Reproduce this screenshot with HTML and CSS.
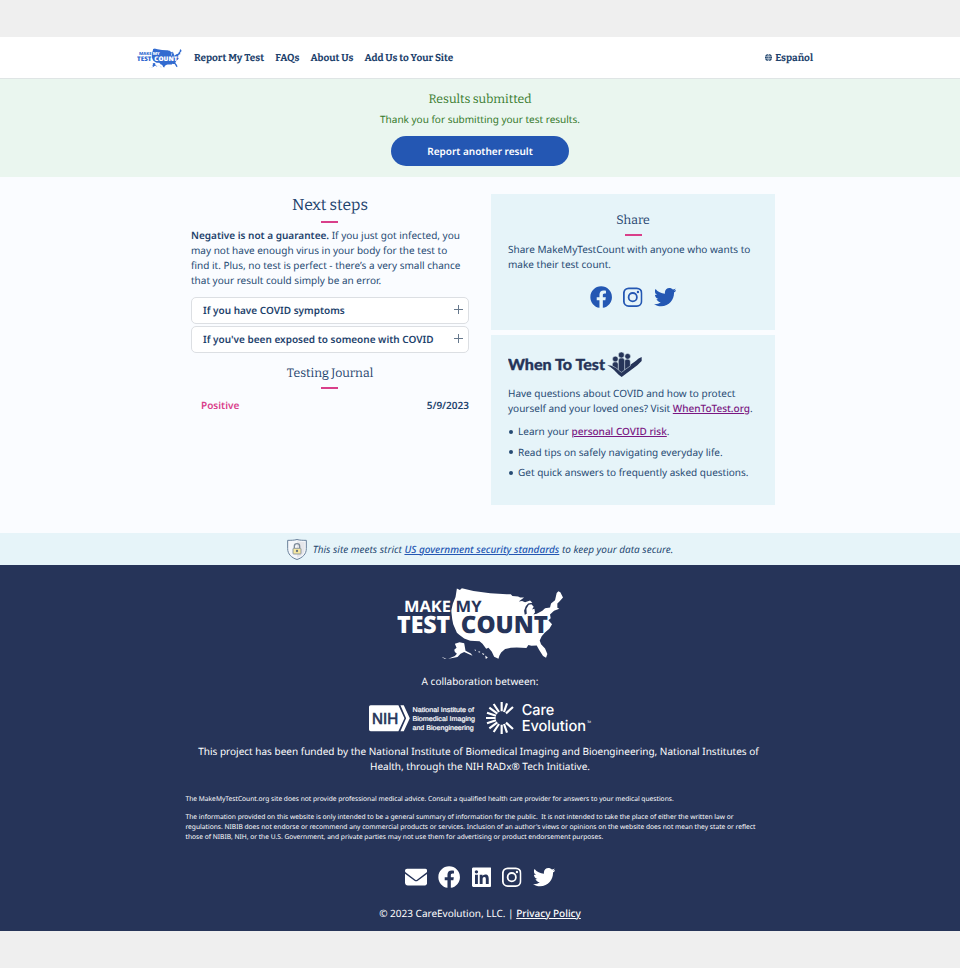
FILE: index.html
```
<!DOCTYPE html>
<html lang="en">
<head>
<meta charset="utf-8">
<title>MakeMyTestCount</title>
<link rel="stylesheet" href="styles.css">
</head>
<body>
<svg class="defs" aria-hidden="true">
  <symbol id="logo" viewBox="20 18 502 224">
    <path fill="currentColor" d="M200 25L209 29 215 24 250 32 300 39 350 42 362 42 367 47 384 49 390 52 402 52 386 64 396 62 405 66 420 61 427 68 414 70 407 78 402 92 404 104 410 101 409 86 416 74 424 72 431 80 426 88 433 86 435 96 430 103 440 101 457 92 465 84 480 82 483 70 495 60 500 38 505 33 511 36 519 52 509 63 502 70 502 83 508 86 492 92 480 103 482 114 475 120 486 132 478 146 464 158 455 168 449 181 453 192 465 205 472 222 468 233 459 228 447 209 440 196 424 197 415 195 409 204 395 203 380 202 362 203 345 207 333 217 328 226 325 236 312 230 305 215 295 203 288 206 277 191 268 183 240 182 222 175 207 164 200 158 189 132 186 117 183 92 188 70 196 50z"/>
    <path fill="currentColor" d="M194 191L208 186 222 189 226 212 242 220 247 227 235 222 222 216 211 221 202 231 187 234 174 236 194 228 200 221 194 216 192 209 199 203zM253 208l5 2-3 3zM265 213l6 3-5 2zM275 219l8 3-4 3zM285 226l8 6-6 5zM153 230l16 6-6 0z"/>
    <g font-family="Open Sans, Noto Sans, sans-serif" stroke-linejoin="round" text-rendering="geometricPrecision">
      <text class="logo-light" x="41" y="96" font-size="47" font-weight="700" textLength="141" lengthAdjust="spacingAndGlyphs">MAKE</text>
      <text class="logo-dark" x="196" y="96" font-size="47" font-weight="700" textLength="78" lengthAdjust="spacingAndGlyphs">MY</text>
      <text class="logo-light" x="20" y="159" font-size="72" font-weight="800" textLength="160" lengthAdjust="spacingAndGlyphs">TEST</text>
      <text class="logo-dark" x="212" y="159" font-size="72" font-weight="800" textLength="262" lengthAdjust="spacingAndGlyphs">COUNT</text>
    </g>
  </symbol>
  <symbol id="facebook" viewBox="0 0 512 512"><path d="M504 256C504 119 393 8 256 8S8 119 8 256c0 123.78 90.69 226.38 209.25 245V327.69h-63V256h63v-54.64c0-62.15 37-96.48 93.67-96.48 27.14 0 55.52 4.84 55.52 4.84v61h-31.28c-30.8 0-40.41 19.12-40.41 38.73V256h68.78l-11 71.69h-57.78V501C413.31 482.38 504 379.78 504 256z"/></symbol>
  <symbol id="instagram" viewBox="0 0 448 512"><rect x="20" y="52" width="408" height="408" rx="112" fill="none" stroke="currentColor" stroke-width="41"/><circle cx="224" cy="256" r="95" fill="none" stroke="currentColor" stroke-width="41"/><circle cx="343" cy="137" r="27"/></symbol>
  <symbol id="twitter" viewBox="0 0 512 512"><path d="M459.37 151.716c.325 4.548.325 9.097.325 13.645 0 138.72-105.583 298.558-298.558 298.558-59.452 0-114.68-17.219-161.137-47.106 8.447.974 16.568 1.299 25.34 1.299 49.055 0 94.213-16.568 130.274-44.832-46.132-.975-84.792-31.188-98.112-72.772 6.498.974 12.995 1.624 19.818 1.624 9.421 0 18.843-1.3 27.614-3.573-48.081-9.747-84.143-51.98-84.143-102.985v-1.299c13.969 7.797 30.214 12.67 47.431 13.319-28.264-18.843-46.781-51.005-46.781-87.391 0-19.492 5.197-37.36 14.294-52.954 51.655 63.675 129.3 105.258 216.365 109.807-1.624-7.797-2.599-15.918-2.599-24.04 0-57.828 46.782-104.934 104.934-104.934 30.213 0 57.502 12.67 76.67 33.137 23.715-4.548 46.456-13.32 66.599-25.34-7.798 24.366-24.366 44.833-46.132 57.827 21.117-2.273 41.584-8.122 60.426-16.243-14.292 20.791-32.161 39.308-52.628 54.253z"/></symbol>
  <symbol id="linkedin" viewBox="0 0 448 512"><path d="M416 32H31.9C14.3 32 0 46.5 0 64.3v383.4C0 465.5 14.3 480 31.9 480H416c17.6 0 32-14.5 32-32.3V64.3c0-17.8-14.4-32.3-32-32.3zM135.4 416H69V202.2h66.5V416zm-33.2-243c-21.3 0-38.5-17.3-38.5-38.5S80.9 96 102.2 96c21.2 0 38.5 17.3 38.5 38.5 0 21.3-17.2 38.5-38.5 38.5zm282.1 243h-66.4V312c0-24.8-.5-56.7-34.5-56.7-34.6 0-39.9 27-39.9 54.9V416h-66.4V202.2h63.7v29.2h.9c8.9-16.8 30.6-34.5 62.9-34.5 67.2 0 79.7 44.3 79.7 101.9V416z"/></symbol>
  <symbol id="envelope" viewBox="0 0 512 512"><path d="M48 64C21.5 64 0 85.5 0 112c0 15.1 7.1 29.3 19.2 38.4L236.8 313.6c11.4 8.5 27 8.5 38.4 0L492.8 150.4c12.1-9.1 19.2-23.3 19.2-38.4c0-26.5-21.5-48-48-48H48zM0 176V384c0 35.3 28.7 64 64 64H448c35.3 0 64-28.7 64-64V176L294.4 339.2c-22.8 17.1-54 17.1-76.8 0L0 176z"/></symbol>
</svg>

<header class="header">
  <svg class="header-logo"><use href="#logo"/></svg>
  <nav class="nav">
    <a>Report My Test</a><a>FAQs</a><a>About Us</a><a>Add Us to Your Site</a>
  </nav>
  <a class="lang"><svg class="globe" viewBox="0 0 16 16"><circle cx="8" cy="8" r="8" fill="currentColor"/><path d="M0 5.500h16M0 10.500h16M8 0v16M8 0C3.500 4 3.500 12 8 16M8 0c4.500 4 4.500 12 0 16" fill="none" stroke="#fff" stroke-width="1"/></svg><span>Español</span></a>
</header>

<section class="banner">
  <h2>Results submitted</h2>
  <p>Thank you for submitting your test results.</p>
  <a class="button">Report another result</a>
</section>

<main class="main">
  <section class="steps">
    <h1>Next steps</h1>
    <div class="rule"></div>
    <p class="guarantee"><b>Negative is not a guarantee.</b> If you just got infected, you<br>may not have enough virus in your body for the test to<br>find it. Plus, no test is perfect - there’s a very small chance<br>that your result could simply be an error.</p>
    <div class="accordion"><span>If you have COVID symptoms</span><i class="plus"></i></div>
    <div class="accordion"><span>If you've been exposed to someone with COVID</span><i class="plus"></i></div>
    <h2 class="journal-title">Testing Journal</h2>
    <div class="rule"></div>
    <div class="journal"><span class="positive">Positive</span><span>5/9/2023</span></div>
  </section>
  <aside class="side">
    <section class="card share">
      <h2>Share</h2>
      <div class="rule"></div>
      <p>Share MakeMyTestCount with anyone who wants to<br>make their test count.</p>
      <div class="social">
        <svg class="icon"><use href="#facebook"/></svg><svg class="icon narrow"><use href="#instagram"/></svg><svg class="icon"><use href="#twitter"/></svg>
      </div>
    </section>
    <section class="card when">
      <svg class="when-logo" viewBox="0 0 402 78">
        <text x="0" y="53" textLength="291" lengthAdjust="spacingAndGlyphs" font-family="Lato, sans-serif" font-weight="900" font-size="46" fill="#263459" stroke="#263459" stroke-width="1">When To Test</text>
        <g fill="#263459"><path d="M298 40Q318 41 334 52L341 57 384 26Q391 19 401 15V27L388 40 341 75 332 68 318 54Q309 45 298 40z"/><g stroke="#e6f4f9" stroke-width="1.500"><path d="M313 42v-5q0-8 9-8t9 8v16q-8-7-18-11zM349 54V29q0-8 9-8t9 8v13z"/><path d="M331 54V26q0-9 9.500-9t9.500 9v28l-9.500 7z"/><circle cx="322" cy="21" r="8.500"/><circle cx="340" cy="9" r="9"/><circle cx="359" cy="13" r="8.500"/></g></g>
      </svg>
      <p>Have questions about COVID and how to protect<br>yourself and your loved ones? Visit <a>WhenToTest.org</a>.</p>
      <ul><li>Learn your <a>personal COVID risk</a>.</li><li>Read tips on safely navigating everyday life.</li><li>Get quick answers to frequently asked questions.</li></ul>
    </section>
  </aside>
</main>

<section class="security">
  <svg class="shield" viewBox="0 0 60 63"><path d="M30 1.500C22 4 12 4 2 4V29C2 45 13 56 30 61.500 47 56 58 45 58 29V4C48 4 38 4 30 1.500z" fill="#f4f6fa" stroke="#69809b" stroke-width="3"/><path d="M30 6V56C46 50 53 42 53 29V9C44 9 36 8 30 6z" fill="#e6e6ea"/><path d="M22 28v-6q0-8 8-8t8 8v6" fill="none" stroke="#7e8b9a" stroke-width="4"/><rect x="18" y="28" width="24" height="17" rx="2" fill="#f6e7a0" stroke="#7e8b9a" stroke-width="2.500"/><circle cx="30" cy="36" r="3.500" fill="#65717d"/></svg>
  <span>This site meets strict <a>US government security standards</a> to keep your data secure.</span>
</section>

<footer class="footer">
  <svg class="footer-logo"><use href="#logo"/></svg>
  <p class="collab">A collaboration between:</p>
  <div class="partners">
    <svg class="nih" viewBox="0 0 320 80">
      <path fill="#fff" d="M5 0H88L106 39 88 78H5q-5 0-5-5V5q0-5 5-5zM94 0h10l18 39-18 39H94l17-39z"/>
      <g font-family="Liberation Sans, Arial, sans-serif" text-rendering="geometricPrecision">
        <text x="9" y="56" font-size="47" fill="#263459" stroke="#263459" stroke-width="2" textLength="78" lengthAdjust="spacingAndGlyphs">NIH</text>
        <g fill="#fff" stroke="#fff" stroke-width=".6" font-size="20.500"><text x="130" y="20" textLength="184" lengthAdjust="spacingAndGlyphs">National Institute of</text><text x="130" y="47" textLength="187" lengthAdjust="spacingAndGlyphs">Biomedical Imaging</text><text x="130" y="74" textLength="183" lengthAdjust="spacingAndGlyphs">and Bioengineering</text></g>
      </g>
    </svg>
    <svg class="care" viewBox="0 0 318 96">
      <path stroke="#fff" stroke-width="6.500" fill="none" d="M29 48H0M30 41L3 32M34 35L10 17M39 30L23 6M47 28V0M54 30L63 4M60 34L81 15M30 55L3 64M34 61L10 79M39 66L23 90M47 68V96M54 66L63 92M60 62L81 81"/>
      <g font-family="Inter, sans-serif" fill="#fff" text-rendering="geometricPrecision"><text x="107" y="40" font-size="45" font-weight="500" textLength="98" lengthAdjust="spacingAndGlyphs">Care</text><text x="107" y="87" font-size="45" font-weight="500" textLength="193" lengthAdjust="spacingAndGlyphs">Evolution</text><text x="303" y="63" font-size="9" textLength="12">TM</text></g>
    </svg>
  </div>
  <p class="funded">This project has been funded by the National Institute of Biomedical Imaging and Bioengineering, National Institutes of<br><span class="funded-end">Health, through the NIH RADx® Tech Initiative.</span></p>
  <div class="legal">
    <p>The MakeMyTestCount.org site does not provide professional medical advice. Consult a qualified health care provider for answers to your medical questions.</p>
    <p>The information provided on this website is only intended to be a general summary of information for the public. &nbsp;It is not intended to take the place of either the written law or<br>regulations. NIBIB does not endorse or recommend any commercial products or services. Inclusion of an author's views or opinions on the website does not mean they state or reflect<br>those of NIBIB, NIH, or the U.S. Government, and private parties may not use them for advertising or product endorsement purposes.</p>
  </div>
  <div class="social">
    <svg class="icon"><use href="#envelope"/></svg><svg class="icon"><use href="#facebook"/></svg><svg class="icon narrow"><use href="#linkedin"/></svg><svg class="icon narrow"><use href="#instagram"/></svg><svg class="icon"><use href="#twitter"/></svg>
  </div>
  <p class="copyright">© 2023 CareEvolution, LLC. | <a>Privacy Policy</a></p>
</footer>
</body>
</html>
```
FILE: styles.css
```
* { box-sizing: border-box; }
body { margin: 0; padding: 37px 0; background: #efefef; color: #264a73; font: 10px/15px "Noto Sans", sans-serif; text-rendering: geometricPrecision; white-space: nowrap; }
h1, h2, p, ul { margin: 0; padding: 0; }
h1, h2 { font-family: Bitter, "DejaVu Serif Condensed", "DejaVu Serif", serif; font-stretch: condensed; font-weight: 400; text-align: center; color: #1d426c; }
h2 { font-size: 12.3px; line-height: 18px; padding-top: 1px; }
b { font-weight: 600; color: #1d426c; }
.defs { position: absolute; width: 0; height: 0; }
.header { height: 42px; background: #fff; border-bottom: 1px solid #dfe5e5; display: flex; align-items: center; padding: 0 147px 0 137px; font: 700 10px/14px Bitter, "DejaVu Serif Condensed", "DejaVu Serif", serif; font-stretch: condensed; color: #1d426c; }
.header-logo { width: 45px; height: 20px; color: #326bd0; --knock: #fff; }
.nav { display: flex; gap: 11px; margin-left: 12px; }
.lang { margin-left: auto; display: flex; align-items: center; gap: 3px; }
.globe { width: 7px; height: 7px; }
.logo-light { fill: currentColor; stroke: var(--knock); stroke-width: 5px; paint-order: stroke; }
.logo-dark { fill: var(--knock); }
.banner { height: 98px; background: #eaf6ef; color: #35792b; text-align: center; padding-top: 11px; }
.banner h2 { color: #35792b; }
.banner p { margin: 3.4px 0 8.6px; }
.button { display: block; width: 178px; height: 30px; margin: 0 auto; border-radius: 15px; background: #2457b3; color: #fff; font-weight: 600; line-height: 30px; }
.main { height: 356px; background: #fafcff; display: flex; gap: 22px; padding: 17px 185px 0 191px; }
.steps { width: 278px; }
h1 { font-size: 15.7px; line-height: 22px; padding-top: 1px; }
.rule { width: 17px; height: 2px; background: #d93f8a; margin: 4px auto 0; }
.steps .rule { margin-left: 130px; }
.guarantee { margin: 5.4px 0 8.6px; }
.accordion { height: 27px; margin-bottom: 2px; padding: 0 5px 0 11px; border: 1px solid #dcdfe3; border-radius: 5px; background: #fff; display: flex; align-items: center; justify-content: space-between; font-weight: 600; color: #1d426c; }
.plus { width: 9px; height: 9px; margin-bottom: 1px; background: linear-gradient(#66788c, #66788c) center/9px 1px no-repeat, linear-gradient(#66788c, #66788c) center/1px 9px no-repeat; }
.journal-title { margin-top: 11px; }
.journal { display: flex; justify-content: space-between; padding-left: 10px; margin-top: 9px; font-weight: 600; color: #1d426c; }
.positive { color: #d93f8a; }
.side { width: 284px; }
.card { background: #e6f4f9; padding: 0 17px; }
.share { height: 136px; padding-top: 17px; }
.share p { margin: 6px 0 14px; }
.social { display: flex; justify-content: center; gap: 11px; color: #2457b3; }
.icon { width: 22.3px; height: 22.3px; fill: currentColor; }
.narrow { width: 19.5px; }
.when { height: 170px; margin-top: 5px; padding-top: 17px; }
.when-logo { display: block; width: 134px; height: 26px; }
.when p { margin: 8px 0 8.4px; }
.when a { color: #7a1782; font-weight: 500; text-decoration: underline; }
ul { list-style: none; }
li { display: flex; align-items: center; margin-bottom: 5.5px; white-space: pre; }
li::before { content: ""; width: 4px; height: 4px; border-radius: 50%; background: #264a73; margin: 0 5px 0 1px; }
.security { height: 32px; background: #e6f4f9; display: flex; align-items: center; justify-content: center; gap: 6px; font-style: italic; }
.security a { color: #2457b3; font-weight: 500; text-decoration: underline; }
.shield { width: 20px; height: 21px; }
.footer { height: 366px; background: #263459; color: #fff; padding-top: 21px; text-align: center; }
.footer-logo { display: block; width: 167px; height: 75px; margin: 0 auto; color: #fff; --knock: #263459; }
.collab { margin-top: 13px; }
.partners { display: flex; gap: 10px; margin: 13px 0 0 369px; height: 32px; align-items: center; }
.nih { width: 107px; height: 27px; }
.care { width: 106px; height: 32px; }
.funded { margin: 10px 0 20px; padding-right: 3px; }
.funded-end { padding-left: 3px; }
.legal { text-align: left; margin-left: 185.5px; font-size: 6.67px; line-height: 10px; }
.legal p + p { margin-top: 8px; }
.footer .social { color: #fff; margin-top: 24px; }
.copyright { margin-top: 17.4px; }
.copyright a { font-weight: 500; text-decoration: underline; }
```
